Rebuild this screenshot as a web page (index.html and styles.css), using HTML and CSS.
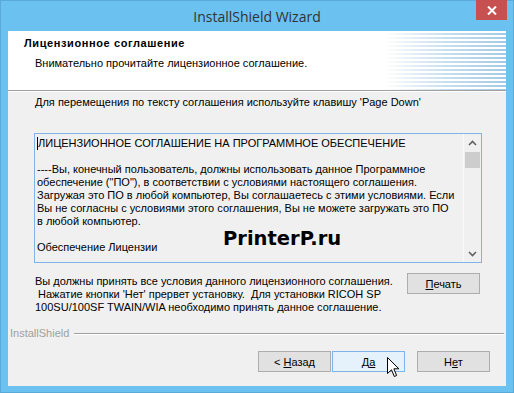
FILE: index.html
```html
<!DOCTYPE html>
<html lang="ru">

<head>
    <meta charset="UTF-8">
    <meta name="viewport" content="width=device-width, initial-scale=1.0">
    <title>InstallShield Wizard</title>
    <link rel="stylesheet" href="styles.css">
</head>

<body>
    <div class="window">
        <div class="titlebar">
            <span class="title">InstallShield Wizard</span>
            <button class="close" type="button" aria-label="Закрыть">
                <svg width="10" height="9" viewBox="0 0 10 9">
                    <path d="M1 0.5 L9 8.5 M9 0.5 L1 8.5" stroke="#fff" stroke-width="2" fill="none" />
                </svg>
            </button>
        </div>

        <div class="client">
            <div class="header">
                <div class="header-text">
                    <h1>Лицензионное соглашение</h1>
                    <p class="subtitle">Внимательно прочитайте лицензионное соглашение.</p>
                </div>
                <div class="header-art"></div>
            </div>

            <div class="content">
                <p class="hint">Для перемещения по тексту соглашения используйте клавишу 'Page Down'</p>

                <div class="license">
                    <div class="license-text">
                        <p><span class="caret"></span>ЛИЦЕНЗИОННОЕ СОГЛАШЕНИЕ НА ПРОГРАММНОЕ ОБЕСПЕЧЕНИЕ</p>
                        <p>----Вы, конечный пользователь, должны использовать данное Программное<br>
                            обеспечение ("ПО"), в соответствии с условиями настоящего соглашения.<br>
                            Загружая это ПО в любой компьютер, Вы соглашаетесь с этими условиями. Если<br>
                            Вы не согласны с условиями этого соглашения, Вы не можете загружать это ПО<br>
                            в любой компьютер.</p>
                        <p>Обеспечение Лицензии</p>
                    </div>
                    <div class="scrollbar">
                        <span class="scroll-btn">
                            <svg width="9" height="6" viewBox="0 0 9 6">
                                <path d="M1 5 L4.5 1.5 L8 5" stroke="#606060" stroke-width="1.6" fill="none" />
                            </svg>
                        </span>
                        <span class="thumb"></span>
                        <span class="scroll-space"></span>
                        <span class="scroll-btn">
                            <svg width="9" height="6" viewBox="0 0 9 6">
                                <path d="M1 1 L4.5 4.5 L8 1" stroke="#606060" stroke-width="1.6" fill="none" />
                            </svg>
                        </span>
                    </div>
                    <div class="watermark">PrinterP.ru</div>
                </div>

                <div class="accept">
                    <p>Вы должны принять все условия данного лицензионного соглашения.<br>
                        &nbsp;Нажатие кнопки 'Нет' прервет установку.&nbsp; Для установки RICOH SP<br>
                        100SU/100SF TWAIN/WIA необходимо принять данное соглашение.</p>
                    <button class="btn" type="button"><u>П</u>ечать</button>
                </div>
            </div>

            <div class="brand"><span>InstallShield</span></div>

            <div class="actions">
                <button class="btn" type="button">&lt; <u>Н</u>азад</button>
                <button class="btn btn-default" type="button">Д<u>а</u>
                    <svg class="pointer" width="13" height="21" viewBox="0 0 13 21">
                        <path d="M0.5 0.5 L0.5 16.5 L4.5 12.8 L7.3 19.5 L9.6 18.5 L6.9 11.8 L11.9 11.8 Z"
                            fill="#fff" stroke="#000" stroke-width="1" />
                    </svg>
                </button>
                <button class="btn btn-no" type="button">Н<u>е</u>т</button>
            </div>
        </div>
    </div>
</body>

</html>
```

FILE: styles.css
```css
body {
    margin: 0;
    font-family: 'Liberation Sans', Arial, sans-serif;
    font-size: 11px;
    color: #000;
}

p {
    margin: 0;
}

.window {
    width: 514px;
    height: 393px;
    box-sizing: border-box;
    background-color: #6bc1ef;
    /* Win8 frame */
    border: 1px solid #5aaad9;
    display: flex;
    flex-direction: column;
}

.titlebar {
    height: 30px;
    display: grid;
    grid-template-columns: 1fr auto 1fr;
    align-items: center;
}

.title {
    grid-column: 2;
    font-family: 'Open Sans', sans-serif;
    font-size: 14px;
    color: #333;
    padding-top: 1px;
}

.close {
    grid-column: 3;
    justify-self: end;
    align-self: start;
    width: 31px;
    height: 20px;
    margin: -1px 6px 0 0;
    padding: 0;
    border: none;
    background-color: #c75050;
    display: flex;
    align-items: center;
    justify-content: center;
}

.client {
    flex: 1;
    margin: 0 7px 6px;
    background-color: #f0f0f0;
    display: flex;
    flex-direction: column;
}

/* cabecera blanca */
.header {
    height: 59px;
    flex-shrink: 0;
    background-color: #fff;
    border-bottom: 1px solid #a0a0a0;
    box-shadow: 0 1px 0 #fff;
    display: flex;
}

.header-text {
    flex: 1;
    padding: 6px 0 0 16px;
}

h1 {
    margin: 0;
    font-size: 11px;
    line-height: 13px;
    font-weight: bold;
    letter-spacing: 0.6px;
}

.subtitle {
    margin: 7px 0 0 11px;
    line-height: 13px;
}

.header-art {
    width: 122px;
    background: repeating-linear-gradient(to bottom, #fff 0 2px, #a3c9e3 2px 4px);
    -webkit-mask-image: linear-gradient(to right, transparent 0, rgba(0, 0, 0, 0.6) 50%, #000 100%);
    mask-image: linear-gradient(to right, transparent 0, rgba(0, 0, 0, 0.6) 50%, #000 100%);
}

.content {
    padding: 5px 24px 0 26px;
}

.hint {
    line-height: 13px;
    padding-left: 1px;
}

.license {
    position: relative;
    margin-top: 24px;
    height: 130px;
    box-sizing: border-box;
    border: 1px solid #7eb4ea;
    display: flex;
}

.license-text {
    flex: 1;
    padding: 3px 0 0 2px;
    line-height: 13px;
    white-space: nowrap;
    overflow: hidden;
}

.license-text p {
    margin-bottom: 13px;
}

.caret {
    display: inline-block;
    width: 1px;
    height: 13px;
    background-color: #000;
    vertical-align: top;
}

.scrollbar {
    width: 17px;
    border-left: 1px solid #fafafa;
    display: flex;
    flex-direction: column;
}

.scroll-btn {
    height: 17px;
    display: flex;
    align-items: center;
    justify-content: center;
}

.thumb {
    height: 16px;
    margin: 1px 1px 0;
    background-color: #cdcdcd;
}

.scroll-space {
    flex: 1;
}

.watermark {
    position: absolute;
    left: 188px;
    top: 95px;
    font-family: 'DejaVu Sans', sans-serif;
    font-weight: bold;
    font-size: 19.5px;
    line-height: 19px;
    color: #000;
}

.accept {
    margin-top: 10px;
    padding-right: 2px;
    display: flex;
    justify-content: space-between;
    align-items: flex-start;
}

.accept p {
    padding: 2px 0 0 1px;
    line-height: 13px;
}

.btn {
    position: relative;
    width: 73px;
    height: 21px;
    padding: 0;
    font-family: inherit;
    font-size: 11px;
    color: #000;
    background-color: #e1e1e1;
    border: 1px solid #adadad;
}

.btn-default {
    background-color: #e5f1fb;
    border-color: #7eb4ea;
}

.pointer {
    position: absolute;
    left: 54px;
    top: 5px;
}

.brand {
    margin-top: 13px;
    padding: 0 2px;
    display: flex;
    align-items: center;
    gap: 5px;
    color: #a0a0a0;
    line-height: 13px;
}

.brand::after {
    content: '';
    flex: 1;
    height: 1px;
    background-color: #a0a0a0;
    box-shadow: 0 1px 0 #fff;
}

.actions {
    margin-top: 11px;
    padding-right: 16px;
    display: flex;
    justify-content: flex-end;
    gap: 1px;
}

.btn-no {
    margin-left: 11px;
}
```
